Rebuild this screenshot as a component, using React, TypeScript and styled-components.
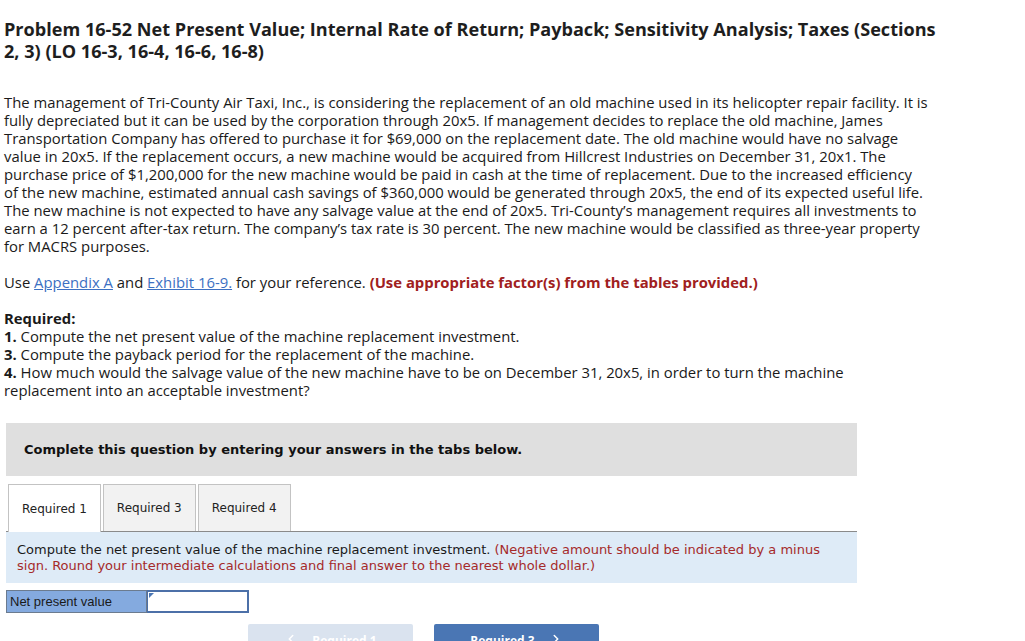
import React from "react";
import styled, { createGlobalStyle } from "styled-components";
import { ChevronLeft, ChevronRight } from "lucide-react";

const Global = createGlobalStyle`
  html, body { margin: 0; padding: 0; background: #fff; }
  body { overflow: hidden; }
`;

const Page = styled.div`
  width: 1025px;
  height: 641px;
  overflow: hidden;
  padding: 18px 0 0 4px;
  box-sizing: border-box;
  font-family: "Open Sans", Lato, sans-serif;
  color: #1a1a1a;
`;

const Title = styled.h1`
  margin: 0;
  font-size: 18.1px;
  line-height: 22px;
  font-weight: 700;
  color: #1e1e1e;
  white-space: nowrap;
`;

const Para = styled.p<{ $gap?: number }>`
  margin: ${(p) => p.$gap ?? 0}px 0 0 0;
  font-size: 14.85px;
  line-height: 18px;
  white-space: nowrap;
`;

const Link = styled.a`
  color: #3c70c2;
  text-decoration: underline;
`;

const Warn = styled.b`
  color: #a02020;
`;

const Main = styled.div`
  width: 851px;
  margin: 24px 0 0 2px;
`;

const Banner = styled.div`
  background: #dfdfdf;
  height: 53px;
  display: flex;
  align-items: center;
  padding-left: 18px;
  font-family: "DejaVu Sans", Verdana, sans-serif;
  font-weight: 700;
  font-size: 13px;
  color: #111;
`;

const Tabs = styled.div`
  display: flex;
  gap: 2px;
  margin-top: 8px;
  padding-left: 2px;
  border-bottom: 1px solid #8a8a8a;
`;

const Tab = styled.div<{ $active?: boolean }>`
  box-sizing: border-box;
  padding: 0 13px;
  display: flex;
  align-items: center;
  border: 1px solid #c3c3c3;
  border-bottom: none;
  background: ${(p) => (p.$active ? "#fff" : "#f2f2f2")};
  font-family: "DejaVu Sans", Verdana, sans-serif;
  font-size: 12px;
  color: #222;
  margin-bottom: ${(p) => (p.$active ? "-1px" : "0")};
  height: ${(p) => (p.$active ? "48px" : "47px")};
`;

const Instruction = styled.div`
  background: #deebf7;
  padding: 10px 10px 9px 11px;
  font-family: "DejaVu Sans", Verdana, sans-serif;
  font-size: 13px;
  line-height: 16px;
  color: #1a1a1a;
`;

const Red = styled.span`
  color: #a52a2a;
`;

const AnswerRow = styled.div`
  display: flex;
  margin-top: 7px;
`;

const Label = styled.div`
  width: 141px;
  height: 23px;
  box-sizing: border-box;
  background: #84aadf;
  border: 1px solid #6b7b8f;
  display: flex;
  align-items: center;
  padding-left: 3px;
  font-family: "Liberation Sans", Arial, sans-serif;
  font-size: 13px;
  color: #1a1a1a;
`;

const InputWrap = styled.div`
  position: relative;
  width: 102px;
  height: 23px;
  box-sizing: border-box;
  border: 2px solid #4c70a8;
  border-left-width: 1px;
  background: #fff;
`;

const Marker = styled.span`
  position: absolute;
  left: 1px;
  top: 1px;
  width: 0;
  height: 0;
  border-top: 5px solid #4a76b4;
  border-right: 5px solid transparent;
`;

const Nav = styled.div`
  display: flex;
  gap: 21px;
  margin: 11px 0 0 242px;
`;

const NavButton = styled.button<{ $primary?: boolean }>`
  width: 165px;
  height: 32px;
  border: none;
  border-radius: 2px;
  background: ${(p) => (p.$primary ? "#4a76b4" : "#dae3ef")};
  color: #fff;
  font-family: "Open Sans", sans-serif;
  font-weight: 700;
  font-size: 12px;
  display: flex;
  justify-content: center;
  align-items: flex-start;
  padding: 8px 0 0 0;
  gap: 14px;
`;

export default function App() {
  return (
    <>
      <Global />
      <Page>
        <Title>
          Problem 16-52 Net Present Value; Internal Rate of Return; Payback; Sensitivity Analysis; Taxes (Sections
          <br />
          2, 3) (LO 16-3, 16-4, 16-6, 16-8)
        </Title>
        <Para $gap={31}>
          The management of Tri-County Air Taxi, Inc., is considering the replacement of an old machine used in its helicopter repair facility. It is
          <br />
          fully depreciated but it can be used by the corporation through 20x5. If management decides to replace the old machine, James
          <br />
          Transportation Company has offered to purchase it for $69,000 on the replacement date. The old machine would have no salvage
          <br />
          value in 20x5. If the replacement occurs, a new machine would be acquired from Hillcrest Industries on December 31, 20x1. The
          <br />
          purchase price of $1,200,000 for the new machine would be paid in cash at the time of replacement. Due to the increased efficiency
          <br />
          of the new machine, estimated annual cash savings of $360,000 would be generated through 20x5, the end of its expected useful life.
          <br />
          The new machine is not expected to have any salvage value at the end of 20x5. Tri-County’s management requires all investments to
          <br />
          earn a 12 percent after-tax return. The company’s tax rate is 30 percent. The new machine would be classified as three-year property
          <br />
          for MACRS purposes.
        </Para>
        <Para $gap={18}>
          Use <Link>Appendix A</Link> and <Link>Exhibit 16-9.</Link> for your reference.{" "}
          <Warn>(Use appropriate factor(s) from the tables provided.)</Warn>
        </Para>
        <Para $gap={18}>
          <b>Required:</b>
          <br />
          <b>1.</b> Compute the net present value of the machine replacement investment.
          <br />
          <b>3.</b> Compute the payback period for the replacement of the machine.
          <br />
          <b>4.</b> How much would the salvage value of the new machine have to be on December 31, 20x5, in order to turn the machine
          <br />
          replacement into an acceptable investment?
        </Para>
        <Main>
          <Banner>Complete this question by entering your answers in the tabs below.</Banner>
          <Tabs>
            <Tab $active>Required 1</Tab>
            <Tab>Required 3</Tab>
            <Tab>Required 4</Tab>
          </Tabs>
          <Instruction>
            Compute the net present value of the machine replacement investment.{" "}
            <Red>
              (Negative amount should be indicated by a minus
              <br />
              sign. Round your intermediate calculations and final answer to the nearest whole dollar.)
            </Red>
          </Instruction>
          <AnswerRow>
            <Label>Net present value</Label>
            <InputWrap>
              <Marker />
            </InputWrap>
          </AnswerRow>
          <Nav>
            <NavButton>
              <ChevronLeft size={14} strokeWidth={2.5} />
              <span>Required 1</span>
            </NavButton>
            <NavButton $primary>
              <span>Required 3</span>
              <ChevronRight size={14} strokeWidth={2.5} />
            </NavButton>
          </Nav>
        </Main>
      </Page>
    </>
  );
}
